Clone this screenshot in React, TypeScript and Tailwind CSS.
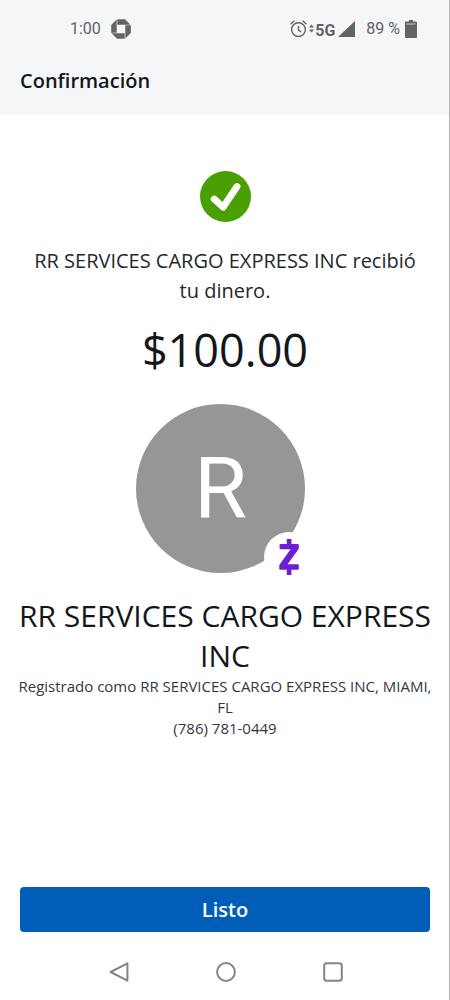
import React from "react";

const payment = {
  recipient: "RR SERVICES CARGO EXPRESS INC",
  amount: 100,
  city: "MIAMI, FL",
  phone: "(786) 781-0449",
};

const ChaseIcon = () => (
  <svg className="h-5 w-5" viewBox="0 0 20 20" fill="#626367" aria-hidden="true">
    <path d="M6.3 0.2H14l5.4 5.5H6.3z" />
    <path d="M19.8 6.3V14l-5.5 5.4V6.3z" />
    <path d="M13.7 19.8H6L0.6 14.3h13.1z" />
    <path d="M0.2 13.7V6l5.5-5.4v13.1z" />
  </svg>
);

const AlarmIcon = () => (
  <svg
    className="h-5 w-[17px]"
    viewBox="0 0 17 20"
    fill="none"
    stroke="#626367"
    strokeWidth="1.4"
    aria-hidden="true"
  >
    <circle cx="8.5" cy="10.6" r="6.9" />
    <path d="M8.5 7v4.2l2.6 1.8M0.6 5.2L4.4 1.7M16.4 5.2L12.6 1.7" />
  </svg>
);

const DataIcon = () => (
  <svg className="h-5 w-[5px]" viewBox="0 0 5 20" fill="#626367" aria-hidden="true">
    <path d="M2.5 5.6L5 8.4H0zM2.5 13.4L5 10.6H0z" />
  </svg>
);

const SignalIcon = () => (
  <svg className="h-4 w-[17px]" viewBox="0 0 17 16" fill="#626367" aria-hidden="true">
    <path d="M17 0v16H0z" />
  </svg>
);

const BatteryIcon = () => (
  <svg className="h-[18px] w-3" viewBox="0 0 12 18" aria-hidden="true">
    <path
      fill="#626367"
      d="M4 0h4v1.6h2.8Q12 1.6 12 2.8v14Q12 18 10.8 18H1.2Q0 18 0 16.8v-14Q0 1.6 1.2 1.6H4z"
    />
    <path d="M1.5 4h9" stroke="#c8c9cb" />
  </svg>
);

const StatusBar = () => (
  <div className="flex h-[58px] items-center justify-between pr-[33px] pl-[70px] font-['Roboto',sans-serif] text-[16px] leading-5 text-[#626367]">
    <div className="flex items-center gap-[10px]">
      <span>1:00</span>
      <ChaseIcon />
    </div>
    <div className="flex items-center">
      <AlarmIcon />
      <span className="ml-[2px]">
        <DataIcon />
      </span>
      <span className="ml-px pt-[3px] font-bold">5G</span>
      <span className="ml-[3px]">
        <SignalIcon />
      </span>
      <span className="ml-[11px]">89 %</span>
      <span className="ml-[5px]">
        <BatteryIcon />
      </span>
    </div>
  </div>
);

const SuccessIcon = () => (
  <svg className="h-[51px] w-[51px]" viewBox="0 0 51 51" role="img" aria-label="Completado">
    <circle cx="25.5" cy="25.5" r="25.5" fill="#4a9f04" />
    <path
      d="M14.2 28l9 8.2L37 15.5"
      fill="none"
      stroke="#fff"
      strokeWidth="6.8"
      strokeLinecap="round"
      strokeLinejoin="round"
    />
  </svg>
);

const ZelleIcon = () => (
  <svg className="h-9 w-5" viewBox="0 0 20 36" fill="#6d1ed4" aria-hidden="true">
    <path d="M7.8 0h4.6v5H19q.8 0 .8.8v4L8.6 25.2h10.2q1 0 1 1v3.6q0 .9-1 .9h-6.4V36H7.8v-5.3H1.2q-.9 0-.9-.9v-3.9L11.6 10.3H1.6q-1 0-1-1V6q0-1 1-1h6.2z" />
  </svg>
);

const Avatar: React.FC<{ name: string }> = ({ name }) => (
  <div className="relative h-[178px] w-[178px]">
    <div className="flex h-[169px] w-[169px] items-center justify-center rounded-full bg-[#969696] font-['Roboto',sans-serif] text-[86px] leading-none text-white">
      {name.charAt(0)}
    </div>
    <div className="absolute right-0 bottom-0 flex h-[50px] w-[50px] items-center justify-center rounded-full bg-white">
      <ZelleIcon />
    </div>
  </div>
);

const NavigationBar = () => (
  <nav className="flex h-[56px] items-center justify-center gap-[87px] pl-px">
    <button type="button" aria-label="Atrás">
      <svg className="h-5 w-5" viewBox="0 0 20 20" fill="none" stroke="#858585" strokeWidth="2">
        <path d="M18.4 1.4v17.2L1.6 10z" strokeLinejoin="round" />
      </svg>
    </button>
    <button type="button" aria-label="Inicio">
      <svg className="h-5 w-5" viewBox="0 0 20 20" fill="none" stroke="#858585" strokeWidth="2">
        <circle cx="10" cy="10" r="8.9" />
      </svg>
    </button>
    <button type="button" aria-label="Recientes">
      <svg className="h-5 w-5" viewBox="0 0 20 20" fill="none" stroke="#858585" strokeWidth="2">
        <rect x="1.2" y="1.2" width="17.6" height="17.6" rx="2.5" />
      </svg>
    </button>
  </nav>
);

const App = () => {
  const { recipient, amount, city, phone } = payment;

  return (
    <div className="relative flex min-h-screen flex-col bg-white font-['Open_Sans',sans-serif] text-[#12171c]">
      <header className="bg-[#f5f6f8]">
        <StatusBar />
        <h1 className="px-5 pt-[9px] pb-5 text-[20px] leading-7 font-semibold">
          Confirmación
        </h1>
      </header>

      <main className="flex flex-1 flex-col items-center px-4 pt-14 text-center">
        <SuccessIcon />
        <p className="mt-6 px-4 text-[20px] leading-[30px] text-[#24282c]">
          {`${recipient} recibió tu dinero.`}
        </p>
        <p className="mt-4 text-[45px] leading-[56px]">{`$${amount.toFixed(2)}`}</p>
        <div className="mt-[26px]">
          <Avatar name={recipient} />
        </div>
        <h2 className="mt-[14px] text-[30px] leading-10">{recipient}</h2>
        <div className="text-[15px] leading-[21px] text-[#35383c]">
          <p>{`Registrado como ${recipient}, ${city}`}</p>
          <p>{phone}</p>
        </div>
      </main>

      <footer className="px-5 pb-3">
        <button
          type="button"
          className="h-[45px] w-full rounded bg-[#005eb8] text-[20px] font-semibold text-white"
        >
          Listo
        </button>
      </footer>
      <NavigationBar />

      {/* screen edge */}
      <div className="absolute inset-y-0 right-0 w-px bg-[#b5b5b5]" />
    </div>
  );
};

export default App;
